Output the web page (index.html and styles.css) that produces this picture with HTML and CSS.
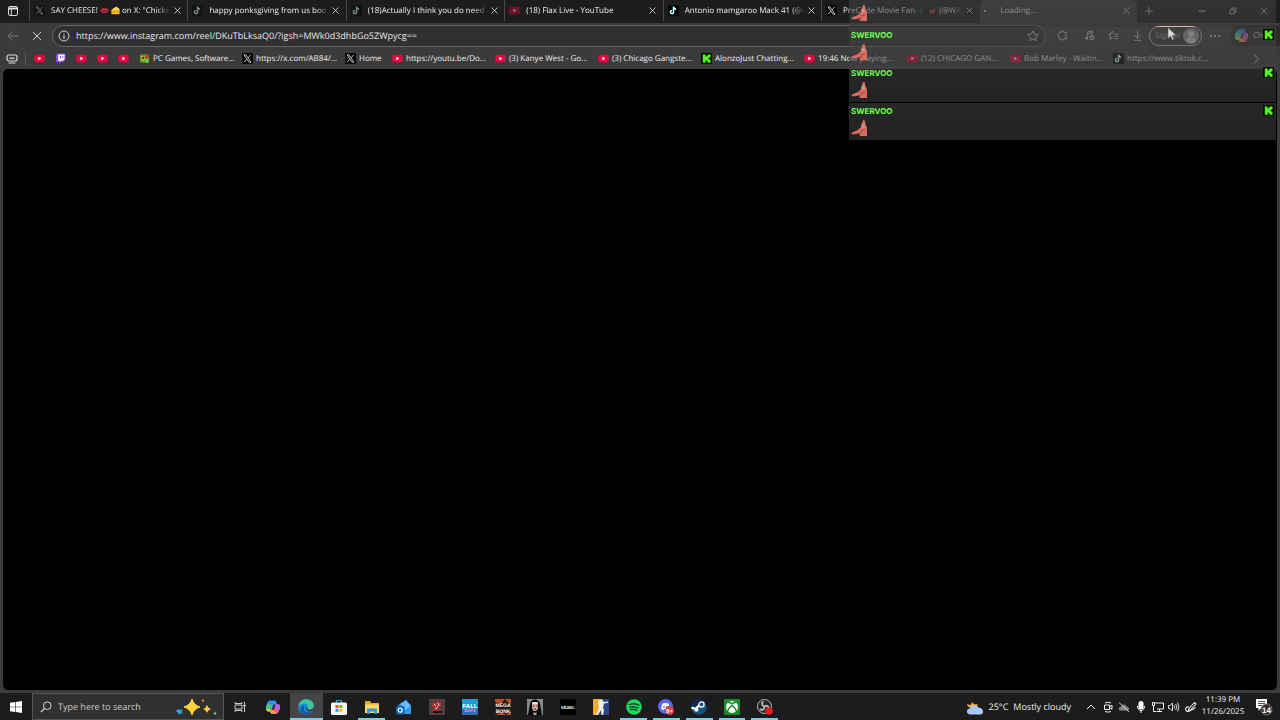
FILE: index.html
```html
<!DOCTYPE html>
<html lang="en">
<head>
    <meta charset="UTF-8">
    <title>Loading...</title>
    <link rel="stylesheet" href="styles.css">
</head>
<body>

<!-- icons -->
<svg class="sprite" aria-hidden="true">
    <symbol id="x" viewBox="0 0 12 12"><rect width="12" height="12" fill="#080808"/><path d="M2.2 2h2.1l5.5 8H7.7z" fill="none" stroke="#ddd" stroke-width=".9"/><path d="M9.5 2L6.7 5.200M5.300 6.800L2.300 10" stroke="#ddd" stroke-width=".9"/></symbol>
    <symbol id="tiktok" viewBox="0 0 12 12"><rect width="12" height="12" rx="1" fill="#050505"/><path d="M6.200 2v5.900a1.700 1.700 0 1 1-1.700-1.700M6.200 2.200c.3 1.500 1.300 2.300 2.700 2.400" fill="none" stroke="#3ff" stroke-width="1.300" transform="translate(-.4 -.3)"/><path d="M6.200 2v5.900a1.700 1.700 0 1 1-1.700-1.700M6.200 2.200c.3 1.500 1.300 2.300 2.700 2.400" fill="none" stroke="#fff" stroke-width="1.300"/></symbol>
    <symbol id="youtube" viewBox="0 0 12 12"><rect x=".3" y="2" width="11.400" height="8" rx="1.800" fill="#e8053f"/><path d="M4.800 4.200v3.600L7.900 6z" fill="#fff"/></symbol>
    <symbol id="twitch" viewBox="0 0 12 12"><path d="M2 .5h9.500v6.700L8.700 10H6.500l-2 2v-2H1V3z" fill="#8a45e6"/><path d="M3.400 1.600h7v5.200L8.700 8.400H6.600L5.100 9.800V8.400H3.400z" fill="#fff"/><path d="M6 3.300v2.600M8.500 3.300v2.600" stroke="#8a45e6"/></symbol>
    <symbol id="games" viewBox="0 0 12 12"><path d="M1 2l4-1 6 1v7l-4 2-6-1z" fill="#4d9c2e"/><path d="M2 3l4 1 1 4-4 1z" fill="#e3b12c"/><path d="M7 2l4 1-1 3-3 1z" fill="#c93a25"/><path d="M6 7l4-1 1 4-3 1z" fill="#7bcb3c"/><circle cx="4.500" cy="5.500" r="1.300" fill="#263d17"/></symbol>
    <symbol id="kick" viewBox="0 0 12 12"><rect width="12" height="12" fill="#041002"/><path d="M2 1.500h3v2.200h1.200V2.600h1.200V1.500h3v3H9.200v1H8.100v1h1.100v1h1.200v3h-3V9.400H6.200V8.300H5v2.200H2z" fill="#53fc18"/></symbol>
    <symbol id="close" viewBox="0 0 12 12"><path d="M2 2l8 8M10 2l-8 8" fill="none" stroke="currentColor"/></symbol>
    <symbol id="copilot" viewBox="0 0 16 16"><path d="M5.500 1.500h4c1.200 0 1.500.5 1.900 1.700L12 5H9L6.500 11.500C6 13 5 13 3.500 12.500 1 12 .5 10 1.200 7.500L2.500 3.500c.6-1.500 1.500-2 3-2z" fill="#2f8fe9"/><path d="M2.200 4.500L1.200 7.500C.5 10 1 12 3.500 12.500l2 .1L7.500 6z" fill="#45c67a"/><path d="M1.200 9.500c0 2 .8 2.800 2.300 3h2l.9-2z" fill="#e6c53a"/><path d="M5 12.600c1 .1 1.400-.4 1.800-1.600L8.900 5H13c2 .5 2.500 2 1.800 4.500l-1.200 3.500c-.6 1.300-1.500 1.800-3 1.800H7c-1.300 0-1.500-1-2-2.200z" fill="#e65b8f"/><path d="M9 5h3.500c2.300.3 3 2 2.300 4.500l-.5 1.500L9 8z" fill="#b565e8"/><path d="M5 12.600c1 .1 1.400-.4 1.800-1.600l.5-1.200 4.700 5H7c-1.300 0-1.500-1-2-2.200z" fill="#f7a04d"/><path d="M9 5.500L7 11h1.800l1.900-5.500z" fill="#262626"/></symbol>
    <symbol id="patrick" viewBox="0 0 16 18"><path d="M10 8C10.500 4.500 11.800 1 12.900.7c1.200.3 1.500 3 1.700 5.300L16 8v9H9l-.8-2.700c-2.200.7-5.700 1.300-7.200.8-.8-.4-.4-1.500.5-1.800l5-2c1.300-1.300 2.700-2.200 3.500-3.300z" fill="#db6b60"/><path d="M9.500 11.500c2 .7 3.500.3 4.800-1M8 14.300l3-.6" fill="none" stroke="#843a35" stroke-width=".8"/><ellipse cx="11.600" cy="7" rx=".9" ry="1.400" fill="#ddd"/><ellipse cx="13.200" cy="7" rx=".7" ry="1.300" fill="#ddd"/><path d="M11.200 7h.8M12.900 7h.6" stroke="#222"/></symbol>
</svg>

<div class="browser">

    <!-- tab strip -->
    <div class="tabs">
        <button class="tab-menu" aria-label="Tab actions"><svg viewBox="0 0 12 12"><rect x="1.500" y="1.500" width="9" height="9" rx="1.500" fill="none" stroke="#ddd"/><path d="M1.500 2.500h9v2h-9z" fill="#ddd"/><path d="M4.300 4v6.500" stroke="#ddd"/></svg></button>
        <div class="tab sleep">
            <svg class="ico"><use href="#x"/></svg>
            <span class="title">SAY CHEESE!
                <svg class="emoji" viewBox="0 0 12 12"><path d="M.5 6C2 3 4 2.500 6 3.600 8 2.500 10 3 11.500 6 9.500 10.500 2.500 10.500.5 6z" fill="#dc2f45"/><path d="M1.500 6h9L8 7.300H4z" fill="#541018"/></svg>
                <svg class="emoji" viewBox="0 0 12 12"><path d="M.5 5L7 1l4.500 3v7H.5z" fill="#f6b52b"/><path d="M.5 5L7 1l4.500 3.500z" fill="#ffdc5a"/><circle cx="4" cy="8" r="1.200" fill="#d8901b"/><circle cx="8.500" cy="7.500" r="1" fill="#d8901b"/></svg>
                on X: "Chicke</span>
            <button class="close" aria-label="Close tab"><svg><use href="#close"/></svg></button>
        </div>
        <div class="tab sleep">
            <svg class="ico"><use href="#tiktok"/></svg>
            <span class="title">happy ponksgiving from us boo
                <svg class="emoji" viewBox="0 0 12 12"><circle cx="6" cy="6" r="5.500" fill="#ffd135"/></svg></span>
            <button class="close" aria-label="Close tab"><svg><use href="#close"/></svg></button>
        </div>
        <div class="tab sleep">
            <svg class="ico"><use href="#tiktok"/></svg>
            <span class="title">(18)Actually I think you do need i</span>
            <button class="close" aria-label="Close tab"><svg><use href="#close"/></svg></button>
        </div>
        <div class="tab sleep">
            <svg class="ico"><use href="#youtube"/></svg>
            <span class="title">(18) Flax Live - YouTube</span>
            <button class="close" aria-label="Close tab"><svg><use href="#close"/></svg></button>
        </div>
        <div class="tab">
            <svg class="ico"><use href="#tiktok"/></svg>
            <span class="title">Antonio mamgaroo Mack 41 (@c</span>
            <button class="close" aria-label="Close tab"><svg><use href="#close"/></svg></button>
        </div>
        <div class="tab">
            <svg class="ico"><use href="#x"/></svg>
            <span class="title">PreCode Movie Fan
                <svg class="emoji" viewBox="0 0 12 12"><path d="M5 1l3 4-2 2 1 4-3-3 1-3z" fill="#2c6470"/></svg>
                <svg class="emoji" viewBox="0 0 12 12"><path d="M2 5l4 1 2-3 2 3-3 4-4-1z" fill="#dc3424"/></svg>
                (@WA</span>
            <button class="close" aria-label="Close tab"><svg><use href="#close"/></svg></button>
        </div>
        <div class="tab on">
            <span class="ico dot"></span>
            <span class="title">Loading...</span>
            <button class="close" aria-label="Close tab"><svg><use href="#close"/></svg></button>
        </div>
        <div class="window-btns">
            <button aria-label="New tab"><svg viewBox="0 0 12 12"><path d="M6 1v10M1 6h10" stroke="currentColor"/></svg></button>
            <button class="min" aria-label="Minimize"><svg viewBox="0 0 12 12"><path d="M2 6h8" stroke="currentColor" stroke-width="1.200"/></svg></button>
            <button aria-label="Restore"><svg viewBox="0 0 12 12"><path d="M2.500 4.500h5v5h-5zM4.500 4V2.500h5v5H8" fill="none" stroke="currentColor"/></svg></button>
            <button aria-label="Close"><svg><use href="#close"/></svg></button>
        </div>
    </div>

    <!-- toolbar -->
    <div class="toolbar">
        <button class="back" aria-label="Back" disabled><svg viewBox="0 0 12 12"><path d="M11.500 6H1M5.500 1.500L1 6l4.500 4.500" fill="none" stroke="currentColor"/></svg></button>
        <button aria-label="Stop"><svg><use href="#close"/></svg></button>
        <label class="address">
            <svg viewBox="0 0 12 12"><circle cx="6" cy="6" r="5" fill="none" stroke="currentColor"/><path d="M6 5.200v3.500M6 3.200v1.100" stroke="currentColor" stroke-width="1.200"/></svg>
            <input type="text" aria-label="Address" value="https://www.instagram.com/reel/DKuTbLksaQ0/?igsh=MWk0d3dhbGo5ZWpycg==">
            <svg viewBox="0 0 12 12"><path d="M6 .8l1.600 3.300 3.600.5-2.600 2.500.6 3.600L6 9l-3.200 1.700.6-3.600L.8 4.600l3.600-.5z" fill="none" stroke="currentColor" stroke-width=".9"/></svg>
        </label>
        <div class="tools">
            <button class="ext" aria-label="Extensions"><svg viewBox="0 0 12 12"><path d="M2.500 2.500h2a1.500 1.500 0 0 1 3 0h2.700v2.200a1.300 1.300 0 0 0 0 2.600v2.400H7.500a1.500 1.500 0 0 1-3 0h-2V7.500a1.500 1.500 0 0 1 0-3z" fill="none" stroke="currentColor"/></svg></button>
            <button aria-label="Media"><svg viewBox="0 0 12 12"><path d="M4 9V2l5-1v4M4 4l5-1" fill="none" stroke="currentColor"/><circle cx="2.700" cy="9" r="1.500" fill="currentColor"/><circle cx="8.500" cy="8.500" r="2" fill="none" stroke="currentColor" stroke-width="1.400"/></svg></button>
            <button aria-label="Favorites"><svg viewBox="0 0 12 12"><path d="M6.500 4L5 1 3.600 4 .7 4.400 2.800 6.500l-.5 3.700L5 8.700M7 4.500h4.500M6.500 7h5M7 9.500h4" fill="none" stroke="currentColor"/></svg></button>
            <button aria-label="Downloads"><svg viewBox="0 0 12 12"><path d="M6 .5v8.200M2.500 5.500L6 9l3.500-3.500M2 11.200h8" fill="none" stroke="currentColor"/></svg></button>
        </div>
        <button class="signin">Sign in
            <svg viewBox="0 0 16 16"><circle cx="8" cy="8" r="8" fill="#909294"/><circle cx="8" cy="6" r="3" fill="#cfd1d2"/><path d="M3 13c0-5 10-5 10 0-3 3-7 3-10 0z" fill="#cfd1d2"/></svg>
        </button>
        <button class="more" aria-label="Settings and more"><svg viewBox="0 0 12 12"><circle cx="2" cy="6" r="1"/><circle cx="6" cy="6" r="1"/><circle cx="10" cy="6" r="1"/></svg></button>
        <button class="chat"><svg><use href="#copilot"/></svg>Chat</button>
    </div>

    <!-- favorites bar -->
    <div class="bookmarks">
        <button class="workspace" aria-label="Workspaces"><svg viewBox="0 0 12 12"><rect x="1" y="2" width="10" height="6" rx="2" fill="none" stroke="#ddd" stroke-width="1.200"/><path d="M3.500 4.500h5v1.300h-5z" fill="#ddd"/><path d="M2.500 10h7" stroke="#ddd"/></svg></button>
        <a class="small" href="#" aria-label="YouTube"><svg><use href="#youtube"/></svg></a>
        <a class="small" href="#" aria-label="Twitch"><svg><use href="#twitch"/></svg></a>
        <a class="small" href="#" aria-label="YouTube"><svg><use href="#youtube"/></svg></a>
        <a class="small" href="#" aria-label="YouTube"><svg><use href="#youtube"/></svg></a>
        <a class="small" href="#" aria-label="YouTube"><svg><use href="#youtube"/></svg></a>
        <a href="#"><svg><use href="#games"/></svg>PC Games, Software...</a>
        <a href="#"><svg><use href="#x"/></svg>https://x.com/AB84/...</a>
        <a class="home" href="#"><svg><use href="#x"/></svg>Home</a>
        <a href="#"><svg><use href="#youtube"/></svg>https://youtu.be/Do...</a>
        <a href="#"><svg><use href="#youtube"/></svg>(3) Kanye West - Go...</a>
        <a href="#"><svg><use href="#youtube"/></svg>(3) Chicago Gangste...</a>
        <a href="#"><svg><use href="#kick"/></svg>AlonzoJust Chatting...</a>
        <a href="#"><svg><use href="#youtube"/></svg>19:46 Now playing...</a>
        <a href="#"><svg><use href="#youtube"/></svg>(12) CHICAGO GAN...</a>
        <a href="#"><svg><use href="#youtube"/></svg>Bob Marley - Waitin...</a>
        <a href="#"><svg><use href="#tiktok"/></svg>https://www.tiktok.c...</a>
        <button class="overflow" aria-label="More favorites"><svg viewBox="0 0 12 12"><path d="M4 1.500L8.500 6 4 10.500" fill="none" stroke="#ddd"/></svg></button>
    </div>

    <main class="page"></main>
</div>

<!-- chat overlay -->
<ul class="chat-overlay">
    <li><svg class="emote"><use href="#patrick"/></svg></li>
    <li><b>SWERVOO</b><svg class="badge"><use href="#kick"/></svg><svg class="emote"><use href="#patrick"/></svg></li>
    <li><b>SWERVOO</b><svg class="badge"><use href="#kick"/></svg><svg class="emote"><use href="#patrick"/></svg></li>
    <li><b>SWERVOO</b><svg class="badge"><use href="#kick"/></svg><svg class="emote"><use href="#patrick"/></svg></li>
</ul>
<svg class="cursor" viewBox="0 0 10 14"><path d="M1 .5v11l2.600-2.400 1.800 4 1.700-.8-1.800-3.800H9z" fill="#ddd" stroke="#555" stroke-width=".6"/></svg>

<!-- taskbar -->
<div class="taskbar">
    <button class="start" aria-label="Start"><svg viewBox="0 0 12 12"><path d="M0 1.700L5.400 1v4.700H0zM6 .9L12 0v5.700H6zM0 6.300h5.400V11L0 10.300zM6 6.300h6V12l-6-.9z" fill="#fff"/></svg></button>
    <label class="search">
        <svg class="glass" viewBox="0 0 12 12"><circle cx="7.300" cy="4.700" r="3.800" fill="none" stroke="#ddd"/><path d="M4.500 7.500L.8 11.200" stroke="#ddd" stroke-width="1.200"/></svg>
        <input type="text" placeholder="Type here to search" aria-label="Search">
        <svg class="sparkles" viewBox="0 0 42 18"><path d="M17 1q1.500 6 8 8-6.500 2-8 8-1.500-6-8-8 6.500-2 8-8z" fill="#ffd23c" stroke="#ffd23c" stroke-linejoin="round"/><path d="M32 7q.8 3 4 4-3.200 1-4 4-.8-3-4-4 3.200-1 4-4z" fill="#ffcf36"/><path d="M3 11l2 1 2.500-.5-.7 2 1 2-2.300-.2L3.500 17 3 14.500 1 13.500z" fill="#31a9dc"/><circle cx="28" cy="2.500" r="1.300" fill="#d96e2b"/><circle cx="40" cy="15.500" r="1.300" fill="#8cc06b"/></svg>
    </label>
    <button class="taskview" aria-label="Task view"><svg viewBox="0 0 12 12"><path d="M1 1v1.500h7V1M1 11V9.500h7V11M1 4h7v4H1zM10.500 1v2M10.500 6v5" fill="none" stroke="#ccc"/><path d="M9.500 3.500h2v2h-2z" fill="#fff"/></svg></button>
    <div class="apps">
        <button aria-label="Copilot"><svg><use href="#copilot"/></svg></button>
        <button class="open current" aria-label="Microsoft Edge"><svg viewBox="0 0 16 16"><circle cx="8" cy="8" r="7.800" fill="#178fd7"/><path d="M.5 7C1 2.500 4.500.2 8 .2c4.500 0 7.800 3 7.800 6.300 0 2.500-2 4-4.300 4-1.500 0-2.500-.7-2-1.400C11 6 8 4 5.500 4.500 3 4.800 1.200 6 .5 7z" fill="#42c6a2"/><path d="M6 8.500C5 13 10 14.500 14.500 12 12 17 5 17 2.500 12 2 9 3.500 7 6 6.500z" fill="#155bad"/><path d="M9.500 9.100c-.5.700.5 1.400 2 1.400 2 0 3.300-.8 3.900-2 1 2-.2 3.500-1.500 3.900C10 13.500 7 11.500 8 8z" fill="#454545"/></svg></button>
        <button aria-label="Microsoft Store"><svg viewBox="0 0 16 16"><path d="M5.500 4V1.500h5V4" fill="none" stroke="#2da7dd" stroke-width="1.200"/><rect y="3.500" width="16" height="12.500" rx="1.500" fill="#f3f5f6"/><path d="M4.500 6h3v3h-3z" fill="#ef5126"/><path d="M8.300 6h3v3h-3z" fill="#7fba00"/><path d="M4.500 9.800h3v3h-3z" fill="#00a4ef"/><path d="M8.300 9.800h3v3h-3z" fill="#ffb900"/></svg></button>
        <button class="open" aria-label="File Explorer"><svg viewBox="0 0 16 16"><path d="M1 2h5l1.500 2H15v10H1z" fill="#e9a923"/><path d="M1 5.500h14V14H1z" fill="#ffda69"/><path d="M3 9.500h10V15h-2.500v-2.500h-5V15H3z" fill="#3997d8"/></svg></button>
        <button aria-label="Outlook"><svg viewBox="0 0 16 16"><path d="M2 6l8-5.500L15 6v9H3z" fill="#176fce"/><path d="M4 5l6-3.500L14 6v3l-5 3z" fill="#6cbcf5"/><path d="M3 15l12-8v8z" fill="#2e9bea"/><rect y="7" width="8.500" height="8.500" rx="1.500" fill="#0d62c5"/><circle cx="4.200" cy="11.200" r="2" fill="none" stroke="#fff" stroke-width="1.200"/></svg></button>
        <button aria-label="Game"><svg viewBox="0 0 16 16"><rect width="16" height="16" fill="#50403f"/><path d="M3 4l9-2v5l-3 1 3 4-4-1-5 2 2-4-2-1z" fill="#b92a2c"/><path d="M5 5l2 2M9 4l1 3M6 10l3-2" stroke="#f0d8d3"/><path d="M4 13h9" stroke="#151515" stroke-width="2"/></svg></button>
        <button aria-label="Fall Guys"><svg viewBox="0 0 16 16"><rect width="16" height="16" fill="#1d9ed6"/><path d="M0 11l16-2v7H0z" fill="#306bb4"/><text x="8" y="9" class="logo fall">FALL</text><text x="8" y="13" class="logo guys">GUYS</text></svg></button>
        <button aria-label="Megabonk"><svg viewBox="0 0 16 16"><rect width="16" height="16" fill="#bd4c20"/><path d="M0 3l6 2 4-5 6 6v6l-5 4-4-3-7 3z" fill="#281813"/><text x="8" y="8" class="logo mega">MEGA</text><text x="8" y="14" class="logo mega">BONK</text></svg></button>
        <button aria-label="The Nun"><svg viewBox="0 0 16 16"><rect width="16" height="16" fill="#858789"/><path d="M1 16L3 5c1-6 9-6 10 0l2 11z" fill="#080808"/><path d="M5 6c0-4 6-4 6 0 .4 4-1 6-3 6S4.600 10 5 6z" fill="#d5aaa1"/><path d="M5 4h6" stroke="#fff" stroke-width="1.400"/><path d="M6 7h1.500M9 7h1.500M7 10h2" stroke="#3a2021"/><path d="M6.500 13l1.500 1 1.500-1v3h-3z" fill="#aaa"/></svg></button>
        <button aria-label="Skate"><svg viewBox="0 0 16 16"><rect width="16" height="16" fill="#000"/><text x="8" y="10" class="logo skate">skate.</text></svg></button>
        <button aria-label="Counter-Strike 2"><svg viewBox="0 0 16 16"><path d="M0 0h9L5 16H0z" fill="#efae29"/><path d="M9 0h7v16H5z" fill="#2a4682"/><path d="M6 1l3-.5L11 3l4-.5v1.300l-4 .7-1 4 1 3-1 4.500H8.500L8 11l-3 5H3l3-7-1-5z" fill="#eee"/></svg></button>
        <button class="open" aria-label="Spotify"><svg viewBox="0 0 16 16"><circle cx="8" cy="8" r="7.800" fill="#1ed760"/><path d="M3.200 5.500c3.500-1 7-.7 9.800.8M3.800 8.200c3-.8 5.800-.4 8.200.9M4.300 10.700c2.500-.6 4.700-.3 6.600.8" fill="none" stroke="#10351d" stroke-width="1.300" stroke-linecap="round"/></svg></button>
        <button class="open" aria-label="Discord"><svg viewBox="0 0 16 16"><circle cx="7.500" cy="7.500" r="7.500" fill="#5865f2"/><path d="M4.500 4.500q3-1 6 0l1.500 5q-1.500 1.700-2.500 1.500l-.7-1H6.200l-.7 1Q4.500 11.200 3 9.500z" fill="#fff"/><circle cx="6" cy="7.800" r=".9" fill="#5865f2"/><circle cx="9" cy="7.800" r=".9" fill="#5865f2"/><circle cx="11.500" cy="11.500" r="4.500" fill="#d93c48"/><text x="11.500" y="13.500" class="logo count">9+</text></svg></button>
        <button class="open" aria-label="Steam"><svg viewBox="0 0 16 16"><circle cx="8" cy="8" r="7.800" fill="#16537d"/><path d="M0 8a8 8 0 0 1 16-.5L10 3 6 7z" fill="#102a4b"/><path d="M.5 8.500l4 1.500 4-4" fill="none" stroke="#fff" stroke-width="2.400"/><circle cx="10.500" cy="5.500" r="2.600" fill="#16537d" stroke="#fff" stroke-width="1.300"/><circle cx="5.500" cy="10.700" r="2" fill="#fff"/></svg></button>
        <button class="open" aria-label="Xbox"><svg viewBox="0 0 16 16"><rect width="16" height="16" rx="1" fill="#188b2b"/><circle cx="8" cy="8" r="6" fill="#fff"/><path d="M4 3.500C6 3 7 4 8 4.800 9 4 10 3 12 3.500M3.500 13C4 10 6.500 7.500 8 6.500c1.500 1 4 3.500 4.500 6.500" fill="none" stroke="#188b2b" stroke-width="1.500"/></svg></button>
        <button class="open" aria-label="OBS Studio"><svg viewBox="0 0 16 16"><circle cx="7.500" cy="7.500" r="7" fill="#242424" stroke="#bbb"/><path d="M7.500 7.500C5 7 4 4 6.500 2.500M7.500 7.500C9.500 6 12 7 12 10M7.500 7.500C7.500 10 5 12 3 10" fill="none" stroke="#bbb" stroke-width="1.800"/><circle cx="12" cy="12" r="3.800" fill="#e71c22"/></svg></button>
    </div>

    <button class="weather">
        <svg viewBox="0 0 18 16"><path d="M6 0c-1 4 2 6 6 5-1 3-3 4-6 4S1 7 1 5l3 1C6 5 6 3 6 0z" fill="#f2a72c"/><path d="M4.500 15.500C-.5 15.500 0 9.500 4 9.500c1-4.500 7-4.500 8.500-.8 5-.5 6.500 6.800 1.500 6.800z" fill="#a9c8f5"/></svg>
        <span>25°C</span><span>Mostly cloudy</span>
    </button>
    <div class="tray">
        <button aria-label="Show hidden icons"><svg viewBox="0 0 12 12"><path d="M2 8l4-4 4 4" fill="none" stroke="currentColor"/></svg></button>
        <button aria-label="Meet Now"><svg viewBox="0 0 12 12"><path d="M2.500 4h5v4.500h-5zM8 5.500l2-1.300v4L8 7M3 2q3-1.500 6 0M3 10.500q3 1.300 6 0" fill="none" stroke="currentColor"/></svg></button>
        <button class="off" aria-label="OneDrive"><svg viewBox="0 0 12 12"><path d="M2.500 9.500C-.5 9 .5 5.500 3 5.700 4 2.500 8 3 8.500 5.700c3-.2 3.500 3.500 1 3.800z" fill="currentColor"/><path d="M1 1.500l10 9.500" stroke="#ccc"/></svg></button>
        <button aria-label="Microphone"><svg viewBox="0 0 12 12"><rect x="3.500" y="0" width="5" height="8.500" rx="2.500" fill="#fff"/><path d="M2.500 5c0 6 7 6 7 0M6 9.500V12" fill="none" stroke="#fff"/></svg></button>
        <button aria-label="Network"><svg viewBox="0 0 12 12"><path d="M3 2h8.500v6H5M.5 1.500h2v3h-2zM1.500 4.500v6h3M7.500 8v2.500M5 10.500h5" fill="none" stroke="currentColor"/></svg></button>
        <button aria-label="Volume"><svg viewBox="0 0 12 12"><path d="M.5 4.500H2L4.500 2v8L2 7.500H.5zM6 4.500q1 1.500 0 3M7.700 3q2 3 0 6M9.500 1.500q3 4.500 0 9" fill="none" stroke="currentColor" stroke-width=".9"/></svg></button>
        <button aria-label="Pen"><svg viewBox="0 0 12 12"><path d="M4 7.500l5.500-6 1.500 1.500-5.500 6-2 .5zM4 6C1 5.500-.5 8 1.500 10c2 1.500 4-1 6-1.500s2.500-2 3-2" fill="none" stroke="currentColor" stroke-width="1.100"/></svg></button>
    </div>
    <button class="clock"><time>11:39 PM</time><time>11/26/2025</time></button>
    <button class="notes" aria-label="14 notifications"><svg viewBox="0 0 18 18"><path d="M1 1h11v9H6l-2.500 3v-3H1z" fill="#fff"/><path d="M3 3.500h7M3 5.500h7M3 7.500h4" stroke="#222" stroke-width=".8"/><circle cx="11.500" cy="11.500" r="5.500" fill="#303030" stroke="#888" stroke-width=".8"/><text x="11.500" y="14.500" class="logo num">14</text></svg></button>
</div>
</body>
</html>
```

FILE: styles.css
```css
*{
    margin: 0;
    padding: 0;
    box-sizing: border-box;
}
body{
    display: flex;
    flex-direction: column;
    position: relative;
    height: 100vh;
    overflow: hidden;
    background: #3b3b3b;
    color: #eee;
    font: 8px/12px "Open Sans", "Noto Sans", sans-serif;
    text-rendering: geometricPrecision;
}
button, input{
    border: 0;
    outline: 0;
    background: none;
    color: inherit;
    font: inherit;
    text-rendering: inherit;
}
button{
    display: flex;
    align-items: center;
    justify-content: center;
    flex: none;
}
a{
    color: inherit;
    text-decoration: none;
}
li{
    list-style: none;
}
svg{
    display: block;
    flex: none;
    width: 12px;
    height: 12px;
}
.sprite{
    position: absolute;
    width: 0;
    height: 0;
}
.browser{
    display: flex;
    flex: 1;
    flex-direction: column;
    min-height: 0;
}

/* tabs */
.tabs{
    display: flex;
    height: 23px;
    background: #1d1d1d;
}
.tab-menu{
    width: 26px;
    height: 21px;
    margin-right: 3px;
}
.tab{
    display: flex;
    flex: 1;
    align-items: center;
    min-width: 0;
    height: 21px;
    padding: 0 4px;
    border-left: 1px solid #484848;
}
.tab .ico{
    width: 11px;
    height: 11px;
    margin-right: 6px;
}
.tab.sleep .ico{
    opacity: .45;
}
.tab .title{
    flex: 1;
    overflow: hidden;
    white-space: nowrap;
    -webkit-mask-image: linear-gradient(90deg, #000 88%, transparent);
    mask-image: linear-gradient(90deg, #000 88%, transparent);
}
.tab .emoji{
    display: inline-block;
    width: 9px;
    height: 9px;
    vertical-align: middle;
}
.tab .close{
    width: 12px;
    height: 12px;
}
.tab .close svg{
    width: 9px;
    height: 9px;
}
.tab.on{
    height: 23px;
    padding-bottom: 2px;
    border-left: 0;
    border-radius: 5px 5px 0 0;
    background: #3b3b3b;
}
.tab .dot{
    width: 2px;
    height: 2px;
    margin: 0 15px 0 0;
    border-radius: 50%;
    background: #ddd;
}
.window-btns{
    display: flex;
    width: 143px;
    color: #ccc;
}
.window-btns button{
    width: 31px;
    height: 21px;
}
.window-btns button:first-child{
    width: 24px;
}
.window-btns .min{
    margin-left: 26px;
}
.window-btns svg{
    width: 10px;
    height: 10px;
}

/* toolbar */
.toolbar{
    display: flex;
    align-items: center;
    height: 25px;
    color: #d0d0d0;
}
.toolbar > button{
    width: 24px;
    height: 20px;
}
.toolbar .back{
    margin-left: 1px;
    color: #777;
}
.address{
    display: flex;
    flex: 1;
    align-items: center;
    height: 22px;
    margin-left: 3px;
    padding: 0 6px 0 5px;
    border: 1px solid #646464;
    border-radius: 11px;
    background: #303030;
}
.address input{
    flex: 1;
    min-width: 0;
    padding: 0 6px;
    color: #e6e6e6;
    font-size: 9px;
}
.tools{
    display: flex;
    margin-left: 4px;
}
.tools button{
    width: 24px;
    height: 20px;
}
.tools .ext{
    margin-right: 3px;
}
.tools svg{
    width: 11px;
    height: 11px;
}
.toolbar .signin{
    justify-content: flex-end;
    gap: 3px;
    width: 53px;
    padding-right: 2px;
    border: 1px solid #e0b6a8;
    border-radius: 10px;
    color: #aaa;
    white-space: nowrap;
}
.signin svg{
    width: 16px;
    height: 16px;
}
.toolbar .more{
    margin: 0 2px 0 1px;
    fill: #ddd;
}
.toolbar .chat{
    justify-content: flex-start;
    gap: 4px;
    width: 51px;
    padding-left: 5px;
    border-radius: 10px 0 0 10px;
    background: #2b2b2b;
}
.chat svg{
    width: 15px;
    height: 15px;
}

/* bookmarks */
.bookmarks{
    display: flex;
    align-items: center;
    gap: 12px;
    height: 21px;
    padding: 0 18px 0 6px;
}
.bookmarks .workspace{
    height: 12px;
    margin-right: -4px;
    padding-right: 7px;
    border-right: 1px solid #5c5c5c;
}
.bookmarks a{
    display: flex;
    align-items: center;
    gap: 3px;
    width: 91px;
    white-space: nowrap;
}
.bookmarks a svg{
    width: 11px;
    height: 11px;
}
.bookmarks .small{
    width: 11px;
    margin-right: -2px;
}
.bookmarks .home{
    width: 35px;
}
.bookmarks .overflow{
    margin-left: auto;
}

.page{
    flex: 1;
    margin: 0 3px 3px;
    border-radius: 5px;
    background: #000;
}

/* chat overlay */
.chat-overlay{
    display: flex;
    flex-direction: column;
    justify-content: flex-end;
    gap: 1px;
    position: absolute;
    top: 0;
    right: 4px;
    width: 427px;
    height: 140px;
    overflow: hidden;
}
.chat-overlay li{
    display: grid;
    grid-template-columns: 1fr 11px;
    row-gap: 2px;
    align-content: start;
    flex: none;
    height: 37px;
    padding: 2px 2px 0;
    background: linear-gradient(rgba(68, 68, 68, .58), rgba(60, 60, 60, .58));
}
.chat-overlay li:first-child{
    align-content: end;
    padding-bottom: 4px;
}
.chat-overlay b{
    color: #6cff4d;
    font: bold 8px/12px Inter, sans-serif;
}
.chat-overlay .badge{
    width: 11px;
    height: 11px;
}
.chat-overlay .emote{
    width: 16px;
    height: 18px;
}
.cursor{
    position: absolute;
    top: 27px;
    left: 1167px;
    width: 10px;
    height: 14px;
}

/* taskbar */
.taskbar{
    display: flex;
    align-items: stretch;
    height: 27px;
    background: #1c1c1c;
    font-size: 9px;
}
.start, .taskview{
    width: 32px;
}
.search{
    display: flex;
    align-items: center;
    width: 192px;
    padding: 0 6px 0 7px;
    border: 1px solid #555;
    background: #303030;
}
.search input{
    flex: 1;
    min-width: 0;
    padding-left: 6px;
}
.search input::placeholder{
    color: #ccc;
}
.search .sparkles{
    width: 42px;
    height: 18px;
}
.apps{
    display: flex;
    width: 524px;
    margin-left: 1px;
}
.apps button{
    position: relative;
    flex: 1;
}
.apps svg{
    width: 16px;
    height: 16px;
}
.apps .current{
    background: #454545;
}
.apps .open::after{
    content: "";
    position: absolute;
    right: 3px;
    bottom: 0;
    left: 3px;
    height: 2px;
    background: #76cfe8;
}
.apps .current::after{
    right: 0;
    left: 0;
}
.logo{
    fill: #fff;
    font: bold 6px/1 "Liberation Sans", sans-serif;
    text-anchor: middle;
}
.guys{
    fill: #f6a5d9;
    font-size: 4px;
}
.mega, .skate{
    font-size: 5px;
}
.num{
    font-size: 8px;
}
.weather{
    gap: 5px;
    margin-left: auto;
    white-space: nowrap;
}
.weather svg{
    width: 18px;
    height: 16px;
}
.tray{
    display: flex;
    width: 116px;
    margin-left: 12px;
}
.tray button{
    flex: 1;
}
.clock{
    flex-direction: column;
    width: 48px;
    padding-bottom: 1px;
    font-size: 8px;
}
.tray .off{
    color: #888;
}
.notes{
    width: 33px;
}
.notes svg{
    width: 18px;
    height: 18px;
}
```
